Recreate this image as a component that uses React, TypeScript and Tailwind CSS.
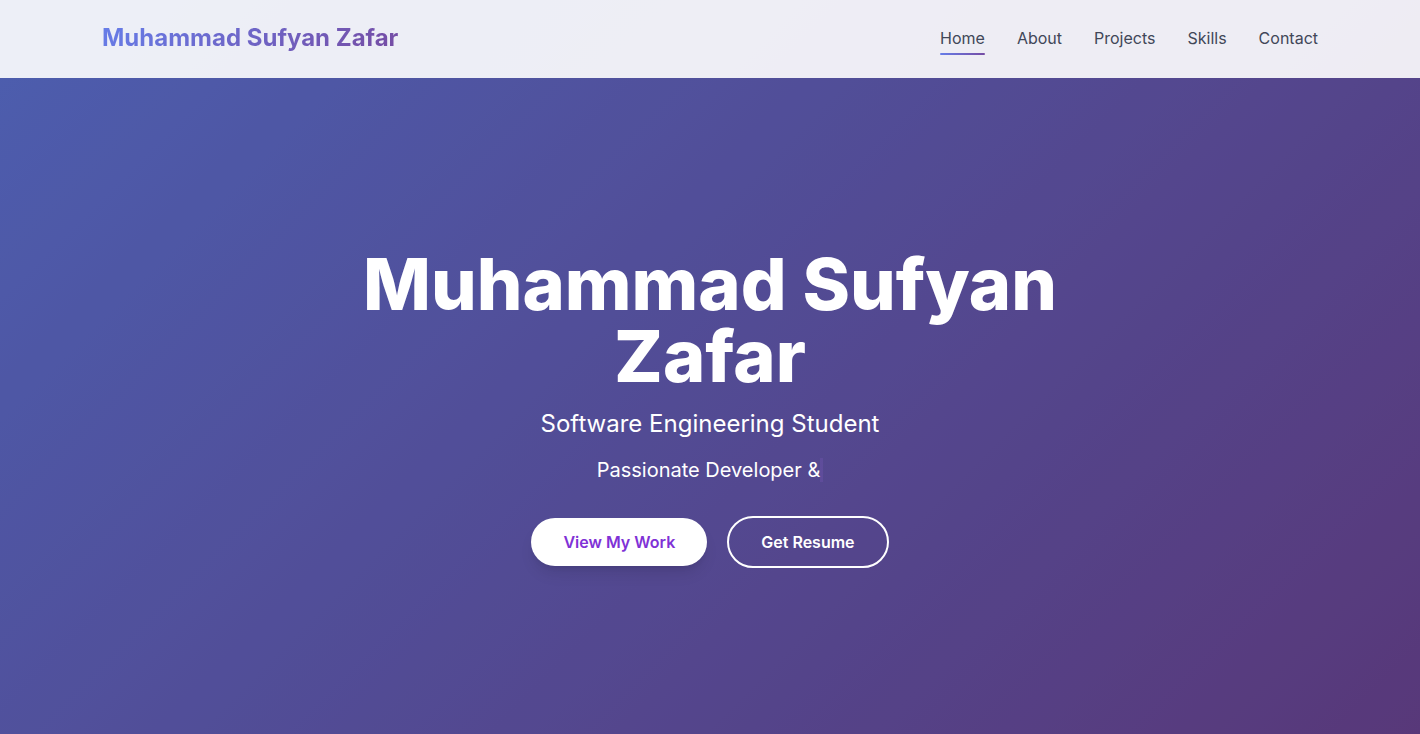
const links = ["Home", "About", "Projects", "Skills", "Contact"];

export default function App() {
  return (
    <div className="min-h-screen bg-linear-[135deg,#667eea_0%,#764ba2_100%] font-['Inter',sans-serif]">
      <div className="flex min-h-screen flex-col bg-black/25">
        <header className="bg-white/90">
          <div className="mx-auto flex max-w-[1280px] items-center justify-between px-8 pt-5 pb-[22px]">
            <a
              href="#home"
              className="bg-linear-[135deg,#667eea_0%,#764ba2_100%] bg-clip-text text-2xl leading-9 font-bold text-transparent"
            >
              Muhammad Sufyan Zafar
            </a>
            <nav className="flex gap-8">
              {links.map((label, i) => (
                <a key={label} href={"#" + label.toLowerCase()} className="relative text-base text-[#414758]">
                  {label}
                  {i === 0 && (
                    <span className="absolute -bottom-[5px] left-0 h-0.5 w-full rounded-full bg-linear-[135deg,#667eea_0%,#764ba2_100%]" />
                  )}
                </a>
              ))}
            </nav>
          </div>
        </header>
        <main id="home" className="flex flex-1 flex-col items-center justify-center px-4 pt-1 text-center text-white">
          <h1 className="max-w-4xl text-7xl leading-none font-extrabold">Muhammad Sufyan Zafar</h1>
          <p className="mt-4 text-2xl">Software Engineering Student</p>
          <p className="mt-4 flex items-center text-xl">
            Passionate Developer &amp;
            <span className="h-6 w-[3px] bg-purple-400/10" />
          </p>
          <div className="mt-8 flex items-center gap-5">
            <button className="rounded-full bg-white px-8 py-3 font-semibold text-[#8032d6] shadow-lg">
              View My Work
            </button>
            <button className="rounded-full border-2 border-white px-8 py-3 font-semibold">Get Resume</button>
          </div>
        </main>
      </div>
    </div>
  );
}
